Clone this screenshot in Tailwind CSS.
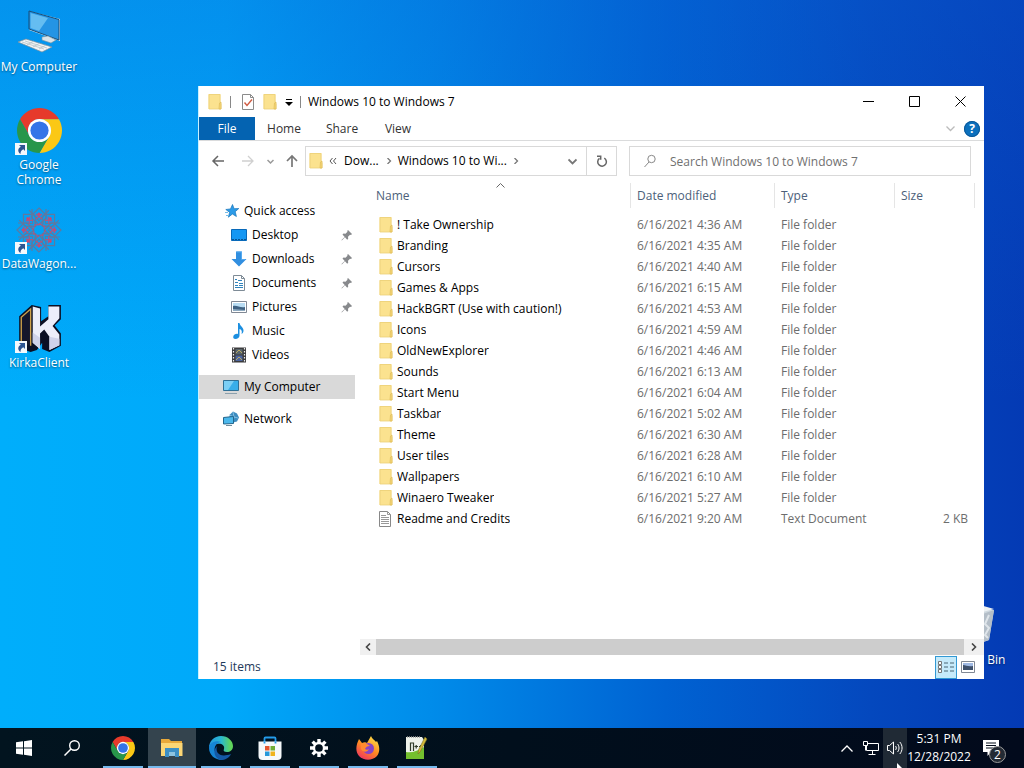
<!DOCTYPE html>
<html lang="en">
<head>
<meta charset="utf-8">
<meta name="viewport" content="width=device-width, initial-scale=1">
<title>Windows 10 to Windows 7</title>
<script src="https://cdn.jsdelivr.net/npm/@tailwindcss/browser@4"></script>
</head>
<body class="font-['Open_Sans','Noto_Sans',sans-serif] text-xs text-black">
<svg class="hidden" aria-hidden="true">
  <symbol id="folder" viewBox="0 0 16 18"><path d="M1.500 1h12v15h-12z" fill="#fbe28f"/><path d="M2 1.500h11V9l1 2v5H2z" fill="none" stroke="#ecd078" stroke-width=".8"/><path d="M12.500 10l1.500-1v7h-2z" fill="#f6d97c" stroke="#dfbb58" stroke-width=".7"/></symbol>
  <symbol id="pin" viewBox="0 0 12 12"><path d="M7 1l4 4-1 1-1-.3-2 2 .2 2-1 1L4 8.300 .8 11.400l-.3-.3L3.700 7.900 1.500 5.600l1-1 2 .2 2-2L6.200 2z" fill="#87898c"/></symbol>
  <symbol id="shortcut" viewBox="0 0 12 12"><path d="M0 0h12v12H0z" fill="#f4f8fc"/><path d="M4 2h6v6L8.300 6.300C6 7.500 5.500 9 5.500 11 2.500 9 2.500 5.500 5.800 3.800z" fill="#2d5592"/></symbol>
  <symbol id="chrome" viewBox="2 2 44 44"><path d="M24 13h19.050A22 22 0 0 0 4.950 13l9.520 16.500A11 11 0 0 1 24 13z" fill="#e63a2b"/><path d="M33.500 29.500L24 46A22 22 0 0 0 43.050 13H24A11 11 0 0 1 33.500 29.500z" fill="#fbc815"/><path d="M14.470 29.500L4.950 13A22 22 0 0 0 24 46l9.500-16.500A11 11 0 0 1 14.470 29.500z" fill="#28964a"/><circle cx="24" cy="24" r="11.300" fill="#fff"/><circle cx="24" cy="24" r="8.900" fill="#3474e8"/></symbol>
  <symbol id="picture" viewBox="0 0 16 12"><path d="M.5.5h15v11H.5z" fill="#fff" stroke="#808894"/><path d="M2 2h12v8H2z" fill="#b8dcf3"/><path d="M2 5c4-1 7 2 12 1v4H2z" fill="#3f6283"/><path d="M2 8l12 1v1H2z" fill="#8fabc1"/></symbol>
</svg>

<div class="flex h-screen min-h-[600px] flex-col overflow-hidden">
  <main class="relative min-h-0 flex-1 bg-[linear-gradient(180deg,#0a5fd455_0%,#00a8ff00_55%),linear-gradient(90deg,#00aefb_0%,#00a9fa_22%,#008cea_42%,#0062d2_65%,#0448be_85%,#043ab4_100%)]">
    <!-- Desktop shortcuts -->
    <nav aria-label="Desktop" class="flex w-[78px] flex-col text-center leading-[15px] text-white [text-shadow:0_1px_2px_#0007]">
      <a href="#" class="flex h-[99px] flex-col items-center gap-[2px] pt-[9px]">
        <svg class="h-[48px] w-12 shrink-0" viewBox="0 0 48 48"><path d="M14 2l31 8v22L14 21z" fill="#d8e8f2"/><path d="M14 2l30 8.500v20.500L14 20z" fill="#2494e4" stroke="#174d78"/><path d="M15.500 4L33 9 24 22l-8.500-3z" fill="#65bdf1"/><path d="M27 28l6-1 8 4-5 3-9-3z" fill="#dbe4e9" stroke="#7c929e" stroke-width=".6"/><path d="M3 33l8-3 26 8-10 5z" fill="#f2f4f5" stroke="#7b8d99" stroke-width=".7"/><path d="M7 33l22 7M10 32l22 7M12 36l7-4M18 38l7-4M24 40l7-4" stroke="#b0bbc2" stroke-width=".7"/></svg>
        <span>My Computer</span>
      </a>
      <a href="#" class="flex h-[99px] flex-col items-center gap-[2px] pt-2">
        <span class="relative block h-12 w-12 shrink-0 py-px"><svg class="mx-auto size-[45px]"><use href="#chrome"/></svg><svg class="absolute bottom-0 left-0 size-3"><use href="#shortcut"/></svg></span>
        <span>Google Chrome</span>
      </a>
      <a href="#" class="flex h-[99px] flex-col items-center gap-[2px] pt-2">
        <span class="relative block h-12 w-12 shrink-0">
          <svg class="h-12 w-12" viewBox="-24 -24 48 48" fill="none" stroke="#60789f" stroke-width="1.200">
            <defs><g id="petal"><path d="M0-22l6 6-6 7-6-7zM-7-21v9l7 7 7-7v-9M0-5l4-5M0-5l-4-5"/><path d="M-3-16L3-11M3-16l-6 5M0-7l5 4" stroke="#b0567f"/><circle cy="-16" r="1.500" fill="#cc4770" stroke="none"/></g></defs>
            <use href="#petal"/><use href="#petal" transform="rotate(45)"/><use href="#petal" transform="rotate(90)"/><use href="#petal" transform="rotate(135)"/><use href="#petal" transform="rotate(180)"/><use href="#petal" transform="rotate(225)"/><use href="#petal" transform="rotate(270)"/><use href="#petal" transform="rotate(315)"/>
          </svg><svg class="absolute bottom-0 left-0 size-3"><use href="#shortcut"/></svg></span>
        <span>DataWagon...</span>
      </a>
      <a href="#" class="flex h-[99px] flex-col items-center gap-[2px] pt-2">
        <span class="relative block h-12 w-12 shrink-0">
          <svg class="h-12 w-12" viewBox="0 1 46 47" preserveAspectRatio="none"><path d="M4 12L16 1l9 2v14l7-5V1h12v14l-6 6 6 8v12l-11 6-7-3v-6l-5 7-6 2-11-4z" fill="#0b1024"/><path d="M6 40V13l9-8v36" fill="#15172b" stroke="#cda14a" stroke-width="1.300"/><path d="M17 2.500l7 2V22l8-7V2.500h10.500V14L36 21.500l6.500 8.500v10.500L33 45V32l-5-7-4 4v15l-7-6z" fill="#eceefa"/><path d="M17 28l7 5v11l-7-6zM33 32l9.500 2v6.500L33 45z" fill="#cfd3ea"/></svg>
          <svg class="absolute bottom-0 left-0 size-3"><use href="#shortcut"/></svg></span>
        <span>KirkaClient</span>
      </a>
    </nav>
    <a href="#" class="absolute right-3 bottom-[61px] flex w-[76px] flex-col items-center text-white [text-shadow:0_1px_2px_#0007]">
      <svg class="h-[50px] w-12" viewBox="0 0 48 48"><path d="M6 8l24-4 14 3-5 30-14 5-14-4z" fill="#cfd8df"/><path d="M30 12l14-5-5 30-9 3z" fill="#b4bec8"/><path d="M6 8l24-6 14 4-15 4z" fill="#eef2f4"/><path d="M39 12l-4 9 4 4-4 7 3 3" fill="none" stroke="#dfe5ea" stroke-width="2"/></svg>
      <span class="whitespace-nowrap leading-[15px]">Recycle Bin</span>
    </a>

    <!-- Explorer window -->
    <section aria-label="Windows 10 to Windows 7" class="absolute top-[86px] right-10 bottom-[49px] left-[198px] flex flex-col border-l border-[#c8f1ff] bg-white">
      <header class="flex h-[31px] shrink-0 items-center pr-px pl-2">
        <svg class="h-[18px] w-4"><use href="#folder"/></svg>
        <span class="ml-[7px] h-3 w-px bg-[#888]"></span>
        <button aria-label="Properties" class="ml-[9px]"><svg class="h-[18px] w-4" viewBox="0 0 16 18"><path d="M2.500 1.500h8l3 3v12h-11z" fill="#fff" stroke="#8b8b8b"/><path d="M10.500 1.500v3h3" fill="none" stroke="#8b8b8b"/><path d="M4.500 9.500l2.500 3 5-6" fill="none" stroke="#cf5b42" stroke-width="1.400"/></svg></button>
        <button aria-label="New folder" class="ml-[6px]"><svg class="h-[18px] w-4"><use href="#folder"/></svg></button>
        <button aria-label="Customize Quick Access Toolbar" class="ml-[7px]"><svg class="size-2" viewBox="0 0 8 8"><path d="M1 1.500h6" stroke="#000"/><path d="M0 4h8L4 8z"/></svg></button>
        <span class="ml-[7px] h-3 w-px bg-[#888]"></span>
        <h1 class="ml-[7px] flex-1 truncate">Windows 10 to Windows 7</h1>
        <button aria-label="Minimize" class="flex h-full w-[46px] items-center justify-center"><svg class="size-[11px]" viewBox="0 0 11 11"><path d="M0 5.500h11" stroke="#000"/></svg></button>
        <button aria-label="Maximize" class="flex h-full w-[46px] items-center justify-center"><svg class="size-[11px]" viewBox="0 0 11 11"><path d="M.5.500h10v10H.5z" fill="none" stroke="#000"/></svg></button>
        <button aria-label="Close" class="flex h-full w-[46px] items-center justify-center"><svg class="size-[11px]" viewBox="0 0 11 11"><path d="M.5.500l10 10m0-10l-10 10" stroke="#000"/></svg></button>
      </header>

      <div class="flex h-6 shrink-0 items-center border-b border-[#dadbdc] text-[#333]">
        <button class="h-[23px] w-14 bg-[#0463b1] text-white">File</button>
        <button class="h-[23px] w-[58px]">Home</button>
        <button class="h-[23px] w-[58px]">Share</button>
        <button class="h-[23px] w-[54px]">View</button>
        <button aria-label="Expand the Ribbon" class="mr-[9px] ml-auto"><svg class="size-[9px]" viewBox="0 0 9 9"><path d="M.5 2.500l4 4 4-4" fill="none" stroke="#bbb" stroke-width="1.300"/></svg></button>
        <button aria-label="Help" class="mr-1 flex size-4 items-center justify-center rounded-full bg-[#0b70bd] font-bold text-white outline outline-[#0a5797] -outline-offset-1">?</button>
      </div>

      <div class="flex h-10 shrink-0 items-center pr-[13px] pl-[12px] text-[#555]">
        <button aria-label="Back"><svg class="size-[14px]" viewBox="0 0 14 14"><path d="M13 7H2m5-5L2 7l5 5" fill="none" stroke="#666" stroke-width="1.500"/></svg></button>
        <button aria-label="Forward" class="ml-4"><svg class="size-[14px]" viewBox="0 0 14 14"><path d="M1 7h11M7 2l5 5-5 5" fill="none" stroke="#d0d0d0" stroke-width="1.300"/></svg></button>
        <button aria-label="Recent locations" class="ml-3"><svg class="size-[7px]" viewBox="0 0 7 7"><path d="M.5 2l3 3 3-3" fill="none" stroke="#999" stroke-width="1.500"/></svg></button>
        <button aria-label="Up" class="ml-[11px]"><svg class="size-[14px]" viewBox="0 0 14 14"><path d="M7 13V2M2 7l5-5 5 5" fill="none" stroke="#777" stroke-width="1.700"/></svg></button>
        <div class="ml-[6px] flex h-[30px] w-[312px] items-center border border-[#d9d9d9] pl-[2px] text-black">
          <svg class="h-[18px] w-4 shrink-0"><use href="#folder"/></svg>
          <svg class="ml-[5px] size-2 shrink-0" viewBox="0 0 8 8"><path d="M3.500 1L1 4l2.500 3M7 1L4.500 4 7 7" fill="none" stroke="#555"/></svg>
          <button class="ml-[7px] shrink-0">Dow...</button>
          <svg class="ml-[7px] size-[6px] shrink-0" viewBox="0 0 6 6"><path d="M1.500 0l3 3-3 3" fill="none" stroke="#777" stroke-width="1.300"/></svg>
          <button class="ml-[6px] shrink-0">Windows 10 to Wi...</button>
          <svg class="ml-[6px] size-[6px] shrink-0" viewBox="0 0 6 6"><path d="M1.500 0l3 3-3 3" fill="none" stroke="#777" stroke-width="1.300"/></svg>
          <button aria-label="Previous locations" class="mr-[9px] ml-auto"><svg class="size-[9px]" viewBox="0 0 9 9"><path d="M.5 2.500l4 4 4-4" fill="none" stroke="#777" stroke-width="1.800"/></svg></button>
          <button aria-label="Refresh" class="flex h-full w-[30px] items-center justify-center border-l border-[#d9d9d9]"><svg class="size-3" viewBox="0 0 12 12"><path d="M8.300 3.200A4.300 4.300 0 1 1 3.500 3.400M1 1.200h3.700v3.500" fill="none" stroke="#666" stroke-width="1.500"/></svg></button>
        </div>
        <div class="ml-3 flex h-[30px] flex-1 items-center border border-[#d9d9d9] pl-[13px]">
          <svg class="size-[14px]" viewBox="0 0 14 14"><circle cx="8.500" cy="5" r="3.700" fill="none" stroke="#888"/><path d="M6 8l-4.500 5" stroke="#888"/></svg>
          <input type="search" aria-label="Search Windows 10 to Windows 7" placeholder="Search Windows 10 to Windows 7" class="ml-[13px] h-full min-w-0 flex-1 bg-transparent outline-none placeholder:text-[#707070]">
        </div>
      </div>

      <div class="flex min-h-0 flex-1">
        <nav aria-label="Navigation pane" class="w-[156px] shrink-0 pt-[18px]">
          <a href="#" class="flex h-6 items-center pl-[26px]"><svg class="size-[14px]" viewBox="0 0 14 14"><path d="M7.500.5l1.600 4.200 4.700-.2-3.600 3.200 1.200 4.800-4-2.500-4 3.200 1.200-4.900L.8 5.500l4.700-.6z" fill="#2c9be8" stroke="#1774b9" stroke-width=".7"/><path d="M0 8.500h3M1 11.500h3" stroke="#75bce9"/></svg><span class="ml-[5px]">Quick access</span></a>
          <a href="#" class="flex h-6 items-center pr-[2px] pl-8"><svg class="h-3 w-4" viewBox="0 0 16 12"><path d="M.5.500h15v11H.5z" fill="#1597f3" stroke="#0869b9"/><path d="M1 10.500h14" stroke="#075494" stroke-dasharray="2 1"/></svg><span class="ml-[5px] flex-1">Desktop</span><svg class="size-3"><use href="#pin"/></svg></a>
          <a href="#" class="flex h-6 items-center pr-[2px] pl-8"><svg class="size-4" viewBox="0 0 16 16"><path d="M5 .5h6V8h4.500L8 15.500.5 8H5z" fill="#318fe0"/><path d="M5.500 1h5v7.500h3.800" fill="none" stroke="#55aaf0"/></svg><span class="ml-[5px] flex-1">Downloads</span><svg class="size-3"><use href="#pin"/></svg></a>
          <a href="#" class="flex h-6 items-center pr-[2px] pl-8"><svg class="size-4" viewBox="0 0 16 16"><path d="M2.500.5h8l3 3v12h-11z" fill="#fff" stroke="#7e8b96"/><path d="M10.500.5v3h3" fill="none" stroke="#7e8b96"/><path d="M4 4.500h2M7 5.500h4M4 7.500h3M8 8.500h4M4 10.500h3M8 10.500h4M4 12.500h8" stroke="#3184bd"/></svg><span class="ml-[5px] flex-1">Documents</span><svg class="size-3"><use href="#pin"/></svg></a>
          <a href="#" class="flex h-6 items-center pr-[2px] pl-8"><svg class="h-3 w-4"><use href="#picture"/></svg><span class="ml-[5px] flex-1">Pictures</span><svg class="size-3"><use href="#pin"/></svg></a>
          <a href="#" class="flex h-6 items-center pl-8"><svg class="size-4" viewBox="0 0 16 16"><path d="M7 0h1.500c.3 3 4.500 4.500 4 8-.2 1.500-1 2.500-2 3 1-3-.3-4.500-2-5v6.500C8.500 14.500 6.500 16 4.500 16S2 14.800 2.300 13.500C2.700 11.500 5 10.500 7 11z" fill="#1c8fe0"/></svg><span class="ml-[5px]">Music</span></a>
          <a href="#" class="flex h-6 items-center pl-8"><svg class="size-4" viewBox="0 0 16 16"><path d="M1 .5h14v15H1z" fill="#3b3b3d"/><path d="M2.500 1v14M13.500 1v14" stroke="#eee" stroke-width="1.200" stroke-dasharray="1.500 1.500"/><path d="M4.500 2h7v5.500h-7z" fill="#59656b"/><path d="M4.500 8.500h7V14h-7z" fill="#4c659f"/><path d="M5 6l3-3 3 3M5 13l3-3 3 3" fill="none" stroke="#b9a861"/></svg><span class="ml-[5px]">Videos</span></a>
          <a href="#" class="my-2 flex h-6 items-center bg-[#d9d9d9] pl-6"><svg class="size-4" viewBox="0 0 16 16"><path d="M.5 1.500h15v10H.5z" fill="#38aeea" stroke="#2f7096"/><path d="M1 2h10L5 11H1z" fill="#7ccff5"/><path d="M2 14.500h12" stroke="#8ba0ad"/></svg><span class="ml-[5px]">My Computer</span></a>
          <a href="#" class="flex h-6 items-center pl-6"><svg class="size-4" viewBox="0 0 16 16"><path d="M10 .5l4 2 2 4-2 4-4 1-4-4 1-4z" fill="#3d8cc0"/><path d="M10 1l1 5 4 1M6.500 4l4.500 2-1 5" fill="none" stroke="#93c9e8" stroke-width=".8"/><path d="M.5 6.500l10-1v7l-10 .5z" fill="#4bb8ec" stroke="#22658c"/><path d="M3 14.500h6" stroke="#6f8c9c"/></svg><span class="ml-[5px]">Network</span></a>
        </nav>

        <div class="ml-[5px] flex min-w-0 flex-1 flex-col">
          <div class="min-h-0 flex-1 overflow-hidden pt-[2px]">
            <table class="w-full table-fixed border-separate border-spacing-0 text-left leading-[18px]">
              <colgroup><col><col class="w-36"><col class="w-[120px]"><col class="w-20"><col class="w-[9px]"></colgroup>
              <thead class="text-[#4c5f7a]">
                <tr class="h-[31px] align-top">
                  <th class="p-0 font-normal"><div class="relative h-[25px] border-r border-[#e5e5e5] pt-1 pl-4">Name<svg class="absolute top-0 right-[125px] h-[5px] w-[9px]" viewBox="0 0 9 5"><path d="M.5 4.500l4-4 4 4" fill="none" stroke="#666"/></svg></div></th>
                  <th class="p-0 font-normal"><div class="h-[25px] border-r border-[#e5e5e5] pt-1 pl-[6px]">Date modified</div></th>
                  <th class="p-0 font-normal"><div class="h-[25px] border-r border-[#e5e5e5] pt-1 pl-[6px]">Type</div></th>
                  <th class="p-0 font-normal"><div class="h-[25px] border-r border-[#e5e5e5] pt-1 pl-[6px]">Size</div></th>
                  <td></td>
                </tr>
              </thead>
              <tbody id="files"></tbody>
            </table>
          </div>
          <div class="flex h-4 shrink-0 bg-[#f0f0f0]">
            <button aria-label="Scroll left" class="flex w-4 items-center justify-center"><svg class="size-2" viewBox="0 0 8 8"><path d="M6 .5L2.500 4 6 7.500" fill="none" stroke="#444" stroke-width="1.600"/></svg></button>
            <div class="flex-1 bg-[#cdcdcd]"></div>
            <button aria-label="Scroll right" class="flex w-5 items-center justify-center"><svg class="size-2" viewBox="0 0 8 8"><path d="M2 .5L5.500 4 2 7.500" fill="none" stroke="#444" stroke-width="1.600"/></svg></button>
          </div>
        </div>
      </div>

      <footer class="flex h-6 shrink-0 items-center pr-[5px] pl-[14px] text-[#1e395b]">
        <span class="flex-1">15 items</span>
        <button aria-label="Details view" class="flex h-[23px] w-[22px] items-center justify-center border border-[#3399d4] bg-[#c5eafa]"><svg class="h-[14px] w-4" viewBox="0 0 16 14"><path d="M.5 1.500h3v3h-3zM.5 5.500h3v3h-3zM.5 9.500h3v3h-3z" fill="#fff" stroke="#777"/><path d="M6 3h10M6 7h10M6 11h10" stroke="#4a6675" stroke-dasharray="4 2"/></svg></button>
        <button aria-label="Large icons view" class="flex h-[23px] w-[22px] items-center justify-center"><svg class="h-3 w-[14px]" viewBox="0 0 14 12"><path d="M.5.500h13v11H.5z" fill="#fff" stroke="#808894"/><path d="M2 2h10v6H2z" fill="#9fb9e3"/><path d="M2 4c3 0 5 2 10 1v4H2z" fill="#3d506b"/></svg></button>
      </footer>
    </section>
  </main>

  <!-- Taskbar -->
  <footer class="relative flex h-10 shrink-0 bg-linear-to-r from-[#02141f] via-[#010f1c] to-[#020a1c] text-white">
    <button aria-label="Start" class="flex w-12 items-center justify-center"><svg class="size-4" viewBox="0 0 16 16"><path d="M0 2.300l7-1v6.300H0zM8 1.200L16 0v7.600H8zM0 8.500h7v6.200l-7-1zM8 8.500h8V16l-8-1.200z" fill="#fff"/></svg></button>
    <button aria-label="Search" class="flex w-12 items-center justify-center"><svg class="size-4" viewBox="0 0 16 16"><circle cx="10.500" cy="5.500" r="4.800" fill="none" stroke="#fff" stroke-width="1.400"/><path d="M7 9L.5 15.500" stroke="#fff" stroke-width="1.500"/></svg></button>
    <div class="ml-[3px] flex gap-px">
      <button aria-label="Google Chrome" class="flex w-12 flex-col items-center justify-between pt-2"><svg class="size-6"><use href="#chrome"/></svg><span class="h-[2px] w-10 bg-[#76b9ed]"></span></button>
      <button aria-label="File Explorer" class="flex w-12 flex-col items-center justify-between bg-[#34444e] pt-2"><svg class="size-6" viewBox="0 0 24 24"><path d="M1 3h8l2 2h11v15H1z" fill="#e8a93a"/><path d="M1 7h21.500v13H1z" fill="#fbd675"/><path d="M5 12h14v9h-4v-4H9v4H5z" fill="#3d8fc4"/><path d="M9 16h6v4H9z" fill="#8ec3df"/></svg><span class="h-[2px] w-full bg-[#76b9ed]"></span></button>
      <button aria-label="Microsoft Edge" class="flex w-12 flex-col items-center justify-between pt-2"><svg class="size-6" viewBox="0 0 24 24"><defs><linearGradient id="eg" x1="0" x2="1"><stop stop-color="#2497de"/><stop offset=".5" stop-color="#29b8d0"/><stop offset=".9" stop-color="#5fd45c"/></linearGradient></defs><path d="M0 12C0 5 5 0 12 0s12 5 12 10c0 4-3 6-6 6-3 0-4-1-3-3 1-4-3-6-7-5-4 0-8 2-8 4z" fill="url(#eg)"/><path d="M0 12c0-6 8-8 12-6-6 1-8 7-5 12 2 3 4 5 6 6C6 24 0 19 0 12z" fill="#1685d4"/><path d="M8 10c-2 7 3 12 14 8-2 4-6 6-10 6-6-1-9-9-4-14z" fill="#1459a5"/></svg><span class="h-[2px] w-10 bg-[#76b9ed]"></span></button>
      <button aria-label="Microsoft Store" class="flex w-12 flex-col items-center justify-between pt-2"><svg class="size-6" viewBox="0 0 24 24"><path d="M6.500 7V2.500Q6.500 1.500 7.500 1.500h9q1 0 1 1V7" fill="none" stroke="#249cea" stroke-width="1.800"/><path d="M.5 5.500h23V20q0 4-4 4h-15q-4 0-4-4z" fill="#f6f9fb"/><path d="M7 10h4.500v4.500H7z" fill="#e45630"/><path d="M12.500 10H17v4.500h-4.500z" fill="#70ad36"/><path d="M7 15.500h4.500V20H7z" fill="#2798da"/><path d="M12.500 15.500H17V20h-4.500z" fill="#f0b41e"/><path d="M6.500 5.500v2M17.500 5.500v2" stroke="#249cea" stroke-width="1.800"/></svg><span class="h-[2px] w-10 bg-[#76b9ed]"></span></button>
      <button aria-label="Settings" class="flex w-12 flex-col items-center justify-between pt-[11px]"><svg class="size-[18px]" viewBox="0 0 18 18"><g stroke="#fff" stroke-width="3.400"><path d="M9 0v4M9 14v4M0 9h4M14 9h4M2.600 2.600l3 3M12.400 12.400l3 3M15.400 2.600l-3 3M5.600 12.400l-3 3"/></g><circle cx="9" cy="9" r="5" fill="#02111d" stroke="#fff" stroke-width="2.300"/></svg><span class="h-[2px] w-10 bg-[#76b9ed]"></span></button>
      <button aria-label="Firefox" class="flex w-12 flex-col items-center justify-between pt-2"><svg class="size-6" viewBox="0 0 24 24"><defs><linearGradient id="fx" x1=".8" y1="0" x2=".2" y2="1"><stop stop-color="#ffe34a"/><stop offset=".5" stop-color="#ff8a22"/><stop offset="1" stop-color="#ee2f64"/></linearGradient></defs><path d="M3 3l3 4c2-1 4-1 5 0L15 0c1 3 4 4 5 6l1-1c3 6 3 11 0 15-5 5-13 5-18 0-4-5-3-11 0-17z" fill="url(#fx)"/><circle cx="12.500" cy="12.500" r="5.500" fill="#8844c5"/><path d="M5 8c4-1 7 0 9 2-3 0-4 1-5 3 1 1 3 1 4 0-1 3-6 4-8 0z" fill="#ff8930"/></svg><span class="h-[2px] w-10 bg-[#76b9ed]"></span></button>
      <button aria-label="Notepad++" class="flex w-12 flex-col items-center justify-between pt-2"><svg class="size-6" viewBox="0 0 24 24"><path d="M1 1h16l2 3v19H1z" fill="#eef2eb"/><path d="M1 16c6 1 12-1 18-5v12H1z" fill="#74bf2e"/><path d="M2 1h14" stroke="#999" stroke-width="1.500" stroke-dasharray="1 1"/><path d="M5.500 15V7h3v8M9.500 10.500h3.500M11.200 9v3.500M14 10.500h3.500M15.700 9v3.500" fill="none" stroke="#303c2b" stroke-width="1.200"/><path d="M20 1l2 2-7 13-2 2 .5-4z" fill="#d3b83a" stroke="#787025" stroke-width=".6"/></svg><span class="h-[2px] w-10 bg-[#76b9ed]"></span></button>
    </div>
    <div class="ml-auto flex">
      <button aria-label="Show hidden icons" class="flex w-6 items-center justify-center"><svg class="h-[7px] w-3" viewBox="0 0 12 7"><path d="M.5 6.500L6 1l5.500 5.500" fill="none" stroke="#fff" stroke-width="1.300"/></svg></button>
      <button aria-label="Network" class="flex w-6 items-center justify-center"><svg class="h-[14px] w-4" viewBox="0 0 16 14"><path d="M5 2.500h10.500v7H3.500V5M.5.500h4v4h-4zM2.500 4.500v5M9.500 9.500v4M5.500 13.500h7" fill="none" stroke="#fff"/></svg></button>
      <button aria-label="Volume" class="flex w-6 items-center justify-center bg-[#202a35]"><svg class="size-4" viewBox="0 0 16 16"><path d="M.5 5.500h2l4-3.500v12l-4-3.500h-2zM8.500 6c1 1 1 3 0 4M10.500 4c2 2 2 6 0 8M12.800 2c3 3.500 3 8.500 0 12" fill="none" stroke="#fff"/></svg></button>
      <button class="w-16 text-center leading-[18px]"><span class="block">5:31 PM</span><span class="block">12/28/2022</span></button>
      <button aria-label="2 new notifications" class="relative flex w-[53px] pt-[12px] pl-[12px]"><svg class="size-4" viewBox="0 0 16 16"><path d="M0 0h16v12H8l-3.500 4v-4H0z" fill="#fff"/><path d="M3 3h10M3 5.500h10M3 8h7" stroke="#07101d"/></svg><span class="absolute top-[18px] left-[18px] flex size-[17px] items-center justify-center rounded-full border border-[#999] bg-[#232a34]">2</span></button>
    </div>
    <svg class="pointer-events-none absolute right-[115px] bottom-0 h-[5px] w-3" viewBox="0 0 12 5"><path d="M0 0l5 5H0z" fill="#fff"/></svg>
  </footer>
</div>

<script>
const files = [
  ["! Take Ownership", "4:36"], ["Branding", "4:35"], ["Cursors", "4:40"], ["Games & Apps", "6:15"],
  ["HackBGRT (Use with caution!)", "4:53"], ["Icons", "4:59"], ["OldNewExplorer", "4:46"], ["Sounds", "6:13"],
  ["Start Menu", "6:04"], ["Taskbar", "5:02"], ["Theme", "6:30"], ["User tiles", "6:28"],
  ["Wallpapers", "6:10"], ["Winaero Tweaker", "5:27"], ["Readme and Credits", "9:20", "Text Document", "2 KB"]
];
const folder = '<svg class="h-[18px] w-4 shrink-0"><use href="#folder"/></svg>';
const page = '<svg class="h-[18px] w-4 shrink-0" viewBox="0 0 16 18"><path d="M1.500 1.500h8l3 3v12h-11z" fill="#fff" stroke="#888"/><path d="M9.500 1.500v3h3M3 5.500h5M3 7.500h8M3 9.500h8M3 11.500h8M3 13.500h8" fill="none" stroke="#999"/></svg>';
document.getElementById("files").innerHTML = files.map(([name, time, type = "File folder", size = ""]) => `
  <tr class="h-[21px] text-[#6d6d6d]">
    <td class="p-0"><a href="#" class="flex items-center gap-[3px] pl-[18px] text-black">${size ? page : folder}<span class="truncate">${name.replace("&", "&amp;")}</span></a></td>
    <td class="p-0 pl-[6px]">6/16/2021 ${time} AM</td>
    <td class="p-0 pl-[6px]">${type}</td>
    <td class="p-0 pr-[7px] text-right">${size}</td>
    <td></td>
  </tr>`).join("");
</script>
</body>
</html>
